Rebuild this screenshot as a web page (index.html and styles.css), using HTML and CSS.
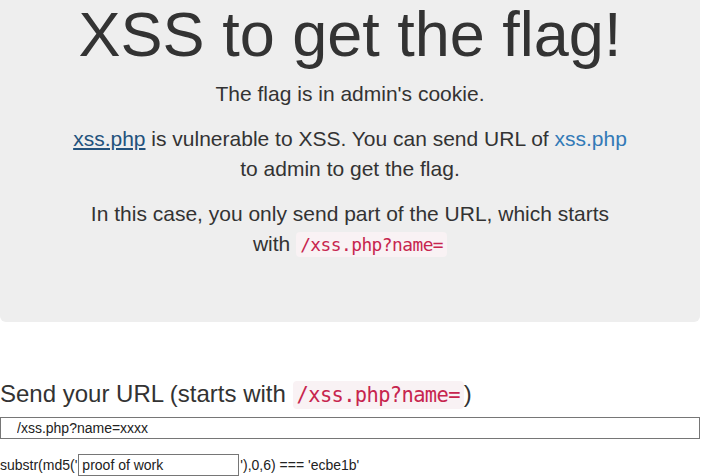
FILE: index.html
```html
<!DOCTYPE html>
<html>
<head>
<meta charset="utf-8">
<title>XSS to get the flag!</title>
<link rel="stylesheet" href="styles.css">
</head>
<body>
<div class="page">
  <div class="jumbotron">
    <h1 class="title">XSS to get the flag!</h1>
    <p class="lead">The flag is in admin's cookie.</p>
    <p class="lead"><a class="link link-active" href="#">xss.php</a> is vulnerable to XSS. You can send URL of <a class="link" href="#">xss.php</a> to admin to get the flag.</p>
    <p class="lead">In this case, you only send part of the URL, which starts with <code class="code">/xss.php?name=</code></p>
  </div>
  <form class="send-form">
    <h3 class="send-title">Send your URL (starts with <code class="code">/xss.php?name=</code>)</h3>
    <input class="url-input" type="text" value="/xss.php?name=xxxx">
    <div class="pow">substr(md5('<input class="pow-input" type="text" value="proof of work">'),0,6) === 'ecbe1b'</div>
  </form>
</div>
</body>
</html>
```

FILE: styles.css
```css
html, body {
  margin: 0;
  padding: 0;
  background: #ffffff;
}
body {
  font-family: "Liberation Sans", Arial, sans-serif;
  font-size: 14px;
  line-height: 1.42857;
  color: #333333;
}
.page {
  width: 700px;
}
.jumbotron {
  background: #eeeeee;
  border-radius: 0 0 6px 6px;
  padding: 0 70px 48px;
  margin-bottom: 30px;
  text-align: center;
}
.title {
  margin: 0 0 10px;
  font-size: 63px;
  font-weight: 500;
  line-height: 1.1;
  color: #333333;
}
.lead {
  margin: 0 0 15px;
  font-size: 21px;
  font-weight: 400;
  line-height: 1.42857;
}
.link {
  color: #337ab7;
  text-decoration: none;
}
.link-active {
  color: #23527c;
  text-decoration: underline;
}
.code {
  font-family: "DejaVu Sans Mono", "Liberation Mono", monospace;
  font-size: 85%;
  letter-spacing: -0.03em;
  padding: 2px 4px;
  color: #c7254e;
  background: #f9f2f4;
  border-radius: 4px;
}
.send-form {
  margin: 0;
}
.send-title {
  margin: 59px 0 9px;
  font-size: 24px;
  font-weight: 500;
  line-height: 1.1;
}
.url-input {
  display: block;
  box-sizing: border-box;
  width: 700px;
  height: 22px;
  margin: 0;
  padding: 0 16px;
  border: 1px solid #767676;
  font-family: "Liberation Sans", Arial, sans-serif;
  font-size: 14px;
  color: #222222;
  background: #ffffff;
}
.pow {
  margin-top: 15px;
  font-size: 14px;
  line-height: 22px;
  color: #222222;
}
.pow-input {
  box-sizing: border-box;
  width: 161px;
  height: 22px;
  margin: 0 1px;
  padding: 0 3px;
  border: 1px solid #767676;
  font-family: "Liberation Sans", Arial, sans-serif;
  font-size: 14px;
  color: #222222;
  background: #ffffff;
}
```
